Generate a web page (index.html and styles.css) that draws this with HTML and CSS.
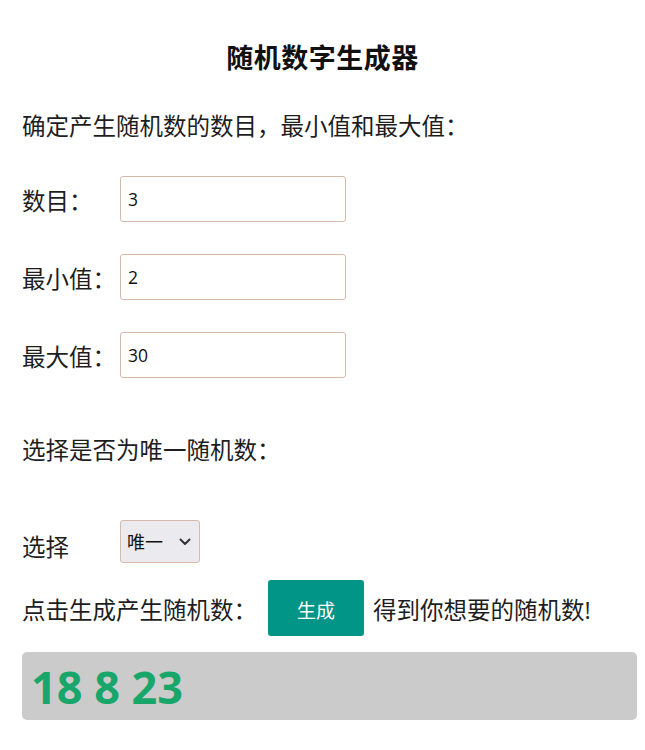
FILE: index.html
```html
<!DOCTYPE html>
<html lang="zh-CN">
<head>
<meta charset="utf-8">
<title>随机数字生成器</title>
<link rel="stylesheet" href="styles.css">
</head>
<body>
<div class="page">
  <h1 class="title">随机数字生成器</h1>
  <p class="intro">确定产生随机数的数目，最小值和最大值：</p>
  <div class="field">
    <label class="label">数目：</label>
    <input class="num-input" type="text" value="3">
  </div>
  <div class="field">
    <label class="label">最小值：</label>
    <input class="num-input" type="text" value="2">
  </div>
  <div class="field">
    <label class="label">最大值：</label>
    <input class="num-input" type="text" value="30">
  </div>
  <p class="unique-q">选择是否为唯一随机数：</p>
  <div class="select-row">
    <span class="label select-label">选择</span>
    <div class="select-wrap">
      <select class="choice">
        <option>唯一</option>
        <option>不唯一</option>
      </select>
      <svg class="chev" width="12" height="8" viewBox="0 0 12 8"><path d="M1.5 1.5 L6 6 L10.5 1.5" fill="none" stroke="#333" stroke-width="2" stroke-linecap="round" stroke-linejoin="round"/></svg>
    </div>
  </div>
  <div class="gen-row">
    <span class="gen-text">点击生成产生随机数：</span>
    <button class="gen-btn">生成</button>
    <span class="gen-text after">得到你想要的随机数!</span>
  </div>
  <div class="result">18 8 23</div>
</div>
</body>
</html>
```
FILE: styles.css
```css
html, body {
  margin: 0;
  padding: 0;
  background: #ffffff;
}
body {
  font-family: "Open Sans", "Noto Sans CJK SC", sans-serif;
  color: #1e1e1e;
}
.page {
  display: flex;
  flex-direction: column;
  padding: 42px 8px 0 22px;
}
.title {
  margin: 0 0 0 -14px;
  font-size: 27px;
  line-height: 32px;
  font-weight: 700;
  text-align: center;
  color: #111;
  letter-spacing: 0.5px;
}
.intro {
  margin: 36px 0 0 0;
  font-size: 23.5px;
  line-height: 32px;
}
.field {
  display: flex;
  align-items: center;
  margin-top: 32px;
}
.intro + .field {
  margin-top: 34px;
}
.label {
  width: 98px;
  flex: none;
  font-size: 23.5px;
  line-height: 32px;
  padding-top: 4px;
}
.num-input {
  box-sizing: border-box;
  width: 226px;
  height: 46px;
  margin: 0;
  padding: 0 7px;
  border: 1px solid #d6b9a9;
  border-radius: 3px;
  font-family: "Open Sans", "Noto Sans CJK SC", sans-serif;
  font-size: 17.5px;
  color: #111;
  background: #fff;
  outline: none;
}
.unique-q {
  margin: 56px 0 0 0;
  font-size: 23.5px;
  line-height: 32px;
}
.select-row {
  display: flex;
  align-items: center;
  margin-top: 53px;
}
.select-label {
  padding-top: 12px;
}
.select-wrap {
  position: relative;
  width: 80px;
  height: 43px;
}
.choice {
  appearance: none;
  -webkit-appearance: none;
  box-sizing: border-box;
  width: 80px;
  height: 43px;
  margin: 0;
  padding: 0 0 0 6px;
  border: 1px solid #d6b9a9;
  border-radius: 3px;
  background: #ebeaef;
  font-family: "Noto Sans CJK SC", sans-serif;
  font-size: 18px;
  color: #111;
}
.chev {
  position: absolute;
  right: 9px;
  top: 18px;
  pointer-events: none;
}
.gen-row {
  display: flex;
  align-items: center;
  margin-top: 17px;
}
.gen-text {
  font-size: 23.5px;
  line-height: 32px;
  padding-top: 3px;
}
.gen-btn {
  width: 96px;
  height: 56px;
  margin: 0 9px 0 11px;
  border: none;
  border-radius: 3px;
  background: #009587;
  color: #fff;
  font-family: "Noto Sans CJK SC", sans-serif;
  font-size: 19px;
  padding: 2px 0 0 0;
}
.result {
  margin-top: 16px;
  height: 68px;
  box-sizing: border-box;
  padding-left: 9px;
  background: #cbcbcb;
  border-radius: 5px;
  font-family: "Open Sans", sans-serif;
  font-weight: 700;
  font-size: 45px;
  line-height: 70px;
  color: #18a66a;
  letter-spacing: 0;
}
```
